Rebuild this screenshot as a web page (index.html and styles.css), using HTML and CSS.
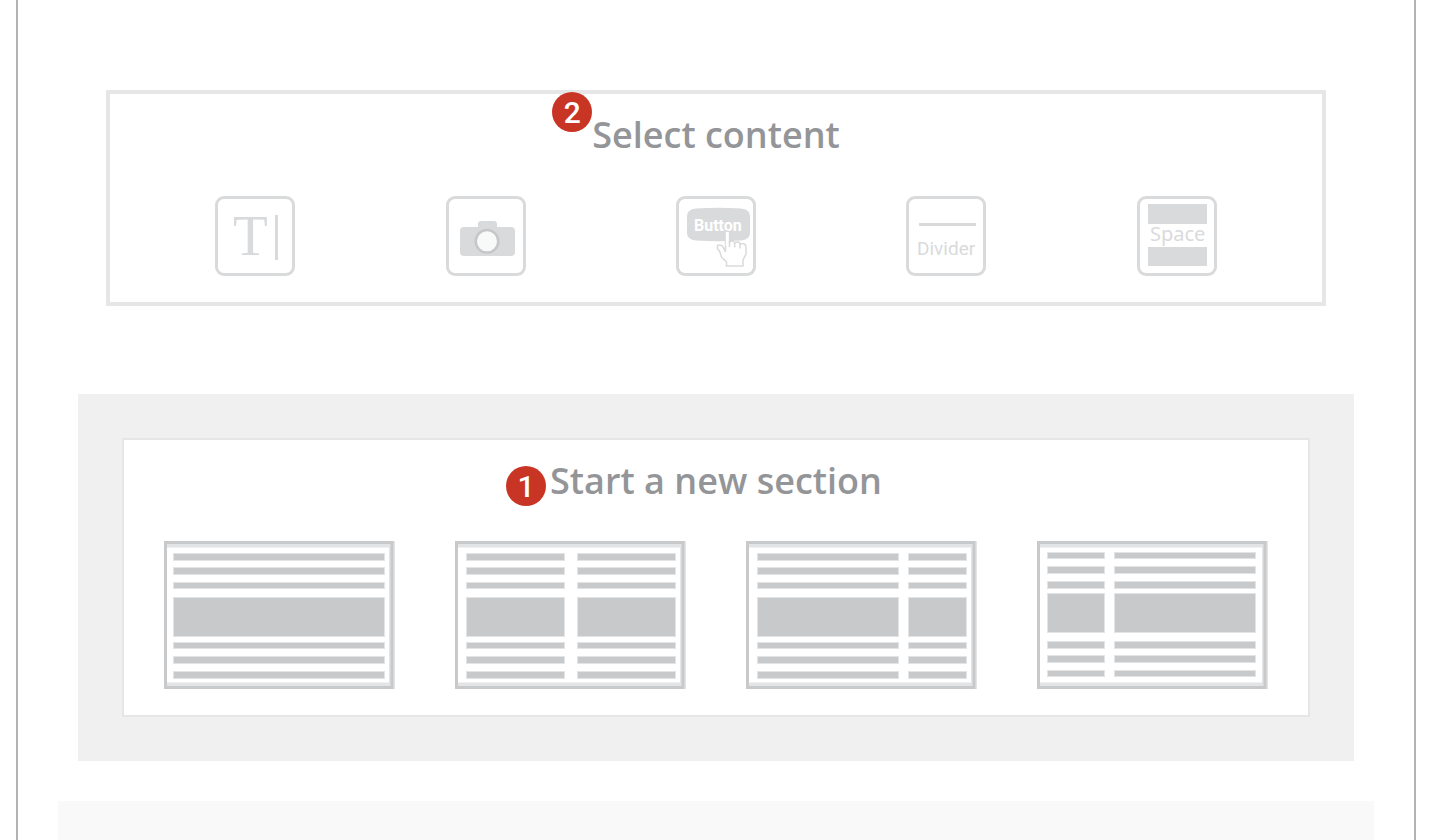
FILE: index.html
```html
<!DOCTYPE html>
<html lang="en">
<head>
  <meta charset="UTF-8">
  <title>Template Editor</title>
  <link rel="stylesheet" href="styles.css">
</head>
<body>
  <main class="canvas">
    <section class="content-panel">
      <h2 class="panel-title"><span class="title-text">Select content<span class="badge badge-content">2</span></span></h2>
      <div class="content-tools">
        <button type="button" class="tool" aria-label="Text">
          <svg viewBox="0 0 80 80">
            <text class="icon-serif" x="18" y="59">T</text>
            <rect x="60" y="19" width="3" height="45"/>
          </svg>
        </button>
        <button type="button" class="tool" aria-label="Image">
          <svg viewBox="0 0 80 80">
            <rect x="32" y="25" width="19" height="12" rx="3"/>
            <rect x="14" y="31" width="55" height="29" rx="4"/>
            <circle class="lens" cx="41" cy="45.3" r="11.3"/>
          </svg>
        </button>
        <button type="button" class="tool" aria-label="Button">
          <svg viewBox="0 0 80 80">
            <path d="M20 12.500Q42 11 65 12.500Q74 13.500 74 20V37Q74 43.500 65 44.500Q42 46 20 44.500Q11 43.500 11 37V20Q11 13.500 20 12.500Z"/>
            <text class="icon-button" x="18" y="35">Button</text>
            <path class="hand" d="M49.500 56V37Q49.500 35 51.300 35T53 37V46Q58 43.500 58.500 47Q63.500 44.500 64 48Q69.500 46.500 70 51V58L67 64V70H50.500V66L45.500 61L43.500 55L41.500 53V49.500Q45 48 47 51L49.500 56"/>
            <path class="finger" d="M51.300 36V50"/>
            <path class="knuckles" d="M53.500 45V51M58.700 47V51.500M64 48V52.500"/>
          </svg>
        </button>
        <button type="button" class="tool" aria-label="Divider">
          <svg viewBox="0 0 80 80">
            <rect x="13" y="27" width="57" height="3"/>
            <text class="icon-divider" x="11" y="59">Divider</text>
          </svg>
        </button>
        <button type="button" class="tool" aria-label="Space">
          <svg viewBox="0 0 80 80">
            <rect x="11" y="8" width="59" height="20"/>
            <text class="icon-space" x="13" y="45">Space</text>
            <rect x="11" y="51" width="59" height="19"/>
          </svg>
        </button>
      </div>
    </section>

    <section class="section-area">
      <div class="section-panel">
        <h2 class="panel-title"><span class="title-text">Start a new section<span class="badge badge-section">1</span></span></h2>
        <div class="section-layouts">
          <button type="button" class="layout" aria-label="One column">
            <svg viewBox="0 0 231 148">
              <path class="edge" d="M228 0V148M3 144.500H226M3 3.500H226"/>
              <path class="outline" d="M229 1.500H1.500V146.500H229M228 0V148"/>
              <path class="bars" d="M10 13h210v6h-210zM10 27h210v6h-210zM10 42h210v5h-210zM10 57h210v38h-210zM10 102h210v5h-210zM10 116h210v6h-210zM10 131h210v6h-210z"/>
            </svg>
          </button>
          <button type="button" class="layout" aria-label="Two equal columns">
            <svg viewBox="0 0 231 148">
              <path class="edge" d="M228 0V148M3 144.500H226M3 3.500H226"/>
              <path class="outline" d="M229 1.500H1.500V146.500H229M228 0V148"/>
              <path class="bars" d="M12 13h97v6h-97zM12 27h97v6h-97zM12 42h97v5h-97zM12 57h97v38h-97zM12 102h97v5h-97zM12 116h97v6h-97zM12 131h97v6h-97z"/>
              <path class="bars" d="M123 13h97v6h-97zM123 27h97v6h-97zM123 42h97v5h-97zM123 57h97v38h-97zM123 102h97v5h-97zM123 116h97v6h-97zM123 131h97v6h-97z"/>
            </svg>
          </button>
          <button type="button" class="layout" aria-label="Wide left column">
            <svg viewBox="0 0 231 148">
              <path class="edge" d="M228 0V148M3 144.500H226M3 3.500H226"/>
              <path class="outline" d="M229 1.500H1.500V146.500H229M228 0V148"/>
              <path class="bars" d="M12 13h140v6h-140zM12 27h140v6h-140zM12 42h140v5h-140zM12 57h140v38h-140zM12 102h140v5h-140zM12 116h140v6h-140zM12 131h140v6h-140z"/>
              <path class="bars" d="M163 13h57v6h-57zM163 27h57v6h-57zM163 42h57v5h-57zM163 57h57v38h-57zM163 102h57v5h-57zM163 116h57v6h-57zM163 131h57v6h-57z"/>
            </svg>
          </button>
          <button type="button" class="layout" aria-label="Wide right column">
            <svg viewBox="0 0 231 148">
              <path class="edge" d="M228 0V148M3 144.500H226M3 3.500H226"/>
              <path class="outline" d="M229 1.500H1.500V146.500H229M228 0V148"/>
              <path class="bars" d="M11 12h56v5h-56zM11 26h56v6h-56zM11 41h56v6h-56zM11 53h56v38h-56zM11 101h56v6h-56zM11 115h56v6h-56zM11 130h56v5h-56z"/>
              <path class="bars" d="M78 12h140v5h-140zM78 26h140v6h-140zM78 41h140v6h-140zM78 53h140v38h-140zM78 101h140v6h-140zM78 115h140v6h-140zM78 130h140v5h-140z"/>
            </svg>
          </button>
        </div>
      </div>
    </section>

    <div class="footer-area"></div>
  </main>
</body>
</html>
```
FILE: styles.css
```css
* { box-sizing: border-box; }
body { margin: 0; background: #fff; font-family: "Open Sans", "Noto Sans", sans-serif; }
button { display: block; padding: 0; border: none; background: none; cursor: pointer; }
svg { display: block; }

.canvas {
  display: flex;
  flex-direction: column;
  min-height: 100vh;
  margin: 0 40px 0 16px;
  padding-top: 90px;
  border: solid #b3b3b3;
  border-width: 0 2px;
}

/* Titles and step badges */
.panel-title {
  margin: 0;
  color: #939598;
  font-size: 36px;
  font-weight: 600;
  line-height: 50px;
  text-align: center;
}
.title-text { position: relative; display: inline-block; }
.badge {
  position: absolute;
  right: 100%;
  width: 40px;
  height: 40px;
  border-radius: 50%;
  background: #c93524;
  color: #fff;
  font: 500 30px/42px Roboto, sans-serif;
  text-align: center;
}
.badge-content { top: -18px; }
.badge-section { top: 10px; margin-right: 4px; }

/* Content picker */
.content-panel { margin: 0 88px; padding: 16px 30px 26px; border: 4px solid #e6e6e6; }
.content-tools {
  display: grid;
  grid-template-columns: repeat(5, 1fr);
  justify-items: center;
  margin-top: 36px;
}
.tool { width: 80px; height: 80px; border-radius: 9px; box-shadow: inset 0 0 0 3px #d9dadb; }
.tool svg { width: 80px; height: 80px; fill: #d9dadc; }
.icon-serif { font: 57px "Liberation Serif", serif; }
.icon-button { font: bold 16px Roboto, sans-serif; fill: #fff; }
.icon-divider { font: 19px Roboto, sans-serif; }
.icon-space { font: 20px "Noto Sans", sans-serif; }
.lens { fill: #f8faf9; stroke: #c6c7c9; stroke-width: 2.5; }
.hand { fill: #fff; stroke: #d9dadc; stroke-width: 1.5; }
.finger { stroke: #fff; stroke-width: 3; }
.knuckles { stroke: #d9dadc; stroke-width: 1.5; }

/* Section picker */
.section-area { margin: 88px 60px 0; padding: 44px; background: #f0f0f0; }
.section-panel { padding: 16px 40px 26px; border: 2px solid #e6e6e6; background: #fff; }
.section-layouts { display: flex; justify-content: space-between; margin-top: 35px; }
.layout svg { width: 231px; height: 148px; fill: none; }
.outline { stroke: #c8c9cb; stroke-width: 3; }
.edge { stroke: #e3e4e5; stroke-width: 6; }
.bars { fill: #c8c9cb; stroke: #e3e4e5; stroke-width: 2; paint-order: stroke; }

.footer-area { flex: 1; margin: 40px 40px 0; background: #f9f9f9; }
```
